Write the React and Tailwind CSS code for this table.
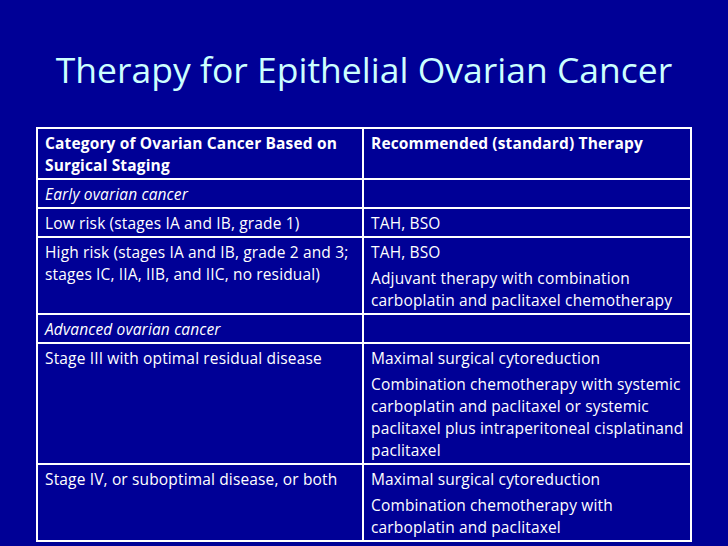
// each cell: list of paragraphs, each paragraph a list of lines (wraps follow the slide)
const rows = [
  { left: [['Early ovarian cancer']], italic: true, right: [] },
  { left: [['Low risk (stages IA and IB, grade 1)']], right: [['TAH, BSO']] },
  {
    left: [['High risk (stages IA and IB, grade 2 and 3;', 'stages IC, IIA, IIB, and IIC, no residual)']],
    right: [['TAH, BSO'], ['Adjuvant therapy with combination', 'carboplatin and paclitaxel chemotherapy']],
  },
  { left: [['Advanced ovarian cancer']], italic: true, right: [] },
  {
    left: [['Stage III with optimal residual disease']],
    right: [
      ['Maximal surgical cytoreduction'],
      [
        'Combination chemotherapy with systemic',
        'carboplatin and paclitaxel or systemic',
        'paclitaxel plus intraperitoneal cisplatinand',
        'paclitaxel',
      ],
    ],
  },
  {
    left: [['Stage IV, or suboptimal disease, or both']],
    right: [['Maximal surgical cytoreduction'], ['Combination chemotherapy with', 'carboplatin and paclitaxel']],
  },
];

function Cell({ paras, className = '' }) {
  return (
    <div className={`px-[7px] pt-[3px] pb-[2px] flex flex-col gap-[4px] ${className}`}>
      {paras.map((lines, j) => (
        <p key={j}>
          {lines.map((l, k) => (
            <span key={k} className="block whitespace-nowrap">
              {l}
            </span>
          ))}
        </p>
      ))}
    </div>
  );
}

export default function App() {
  return (
    <div
      className="w-[728px] h-[546px] bg-[#000096] overflow-hidden"
      style={{ fontFamily: '"Open Sans", Lato, sans-serif' }}
    >
      {/* Title */}
      <h1 className="pt-[46px] text-center text-[35.5px] leading-[46px] text-[#ccffff]">
        Therapy for Epithelial Ovarian Cancer
      </h1>

      {/* Table */}
      <div className="mt-[35px] mx-[36px] border-2 border-white text-[15.5px] leading-[22px] tracking-[0.15px] text-white">
        <div className="grid grid-cols-[326px_1fr] border-b-2 border-white">
          <Cell
            className="font-bold border-r-2 border-white"
            paras={[['Category of Ovarian Cancer Based on', 'Surgical Staging']]}
          />
          <Cell className="font-bold" paras={[['Recommended (standard) Therapy']]} />
        </div>
        {rows.map((r, i) => (
          <div
            key={i}
            className={`grid grid-cols-[326px_1fr] ${i < rows.length - 1 ? 'border-b-2 border-white' : ''}`}
          >
            <Cell className={`border-r-2 border-white ${r.italic ? 'italic' : ''}`} paras={r.left} />
            <Cell className={r.right.length ? '' : 'min-h-[27px]'} paras={r.right} />
          </div>
        ))}
      </div>
    </div>
  );
}
